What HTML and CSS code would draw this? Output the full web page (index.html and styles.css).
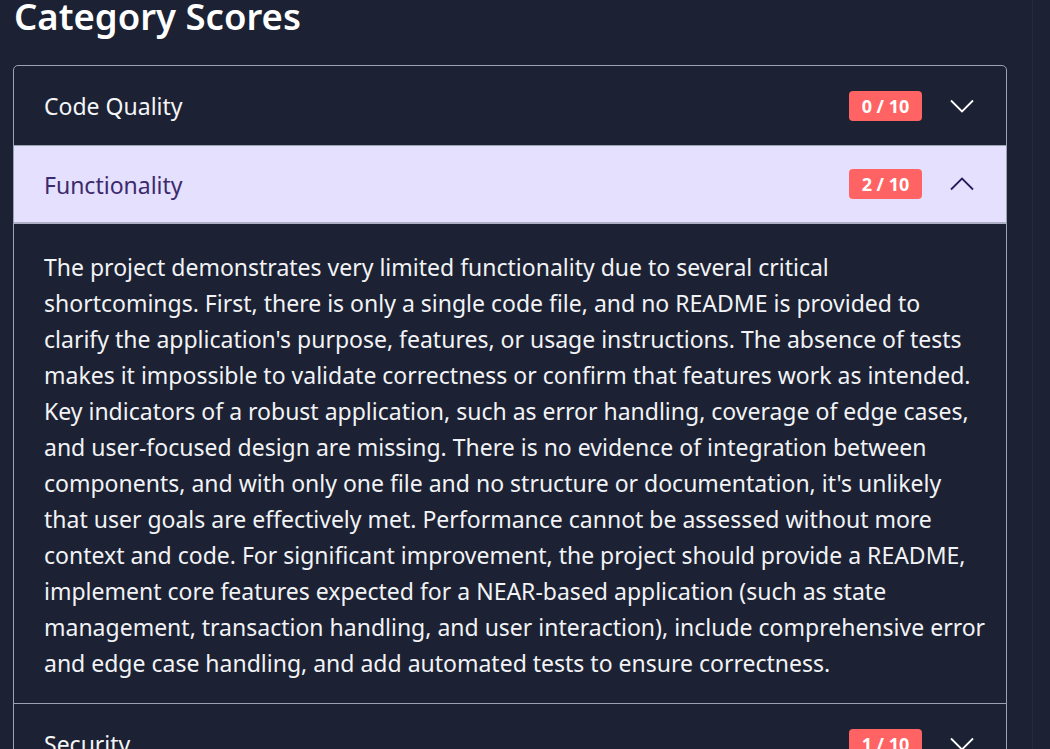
FILE: index.html
```html
<!DOCTYPE html>
<html lang="en">
<head>
<meta charset="utf-8">
<title>Category Scores</title>
<link rel="stylesheet" href="styles.css">
</head>
<body>
<div class="page">
  <h1 class="title">Category Scores</h1>
  <div class="card">
    <div class="item">
      <div class="item-head">
        <span class="item-name">Code Quality</span>
        <span class="badge">0 / 10</span>
        <svg class="chev" viewBox="0 0 24 14" width="24" height="14"><polyline points="1,1.5 12,12.5 23,1.5"/></svg>
      </div>
    </div>
    <div class="item open">
      <div class="item-head">
        <span class="item-name">Functionality</span>
        <span class="badge">2 / 10</span>
        <svg class="chev" viewBox="0 0 24 14" width="24" height="14"><polyline points="1,12.5 12,1.5 23,12.5"/></svg>
      </div>
      <div class="item-body">
        <p>The project demonstrates very limited functionality due to several critical<br>
shortcomings. First, there is only a single code file, and no README is provided to<br>
clarify the application's purpose, features, or usage instructions. The absence of tests<br>
makes it impossible to validate correctness or confirm that features work as intended.<br>
Key indicators of a robust application, such as error handling, coverage of edge cases,<br>
and user-focused design are missing. There is no evidence of integration between<br>
components, and with only one file and no structure or documentation, it's unlikely<br>
that user goals are effectively met. Performance cannot be assessed without more<br>
context and code. For significant improvement, the project should provide a README,<br>
implement core features expected for a NEAR-based application (such as state<br>
management, transaction handling, and user interaction), include comprehensive error<br>
and edge case handling, and add automated tests to ensure correctness.</p>
      </div>
    </div>
    <div class="item">
      <div class="item-head">
        <span class="item-name">Security</span>
        <span class="badge">1 / 10</span>
        <svg class="chev" viewBox="0 0 24 14" width="24" height="14"><polyline points="1,1.5 12,12.5 23,1.5"/></svg>
      </div>
    </div>
  </div>
</div>
</body>
</html>
```
FILE: styles.css
```css
html, body {
  margin: 0;
  padding: 0;
  background: #1c2233;
  height: 100%;
  overflow: hidden;
}

body {
  font-family: "Noto Sans", "Open Sans", sans-serif;
  color: #f2f3f6;
}

.page {
  width: 994px;
  min-height: 100%;
  padding: 0 25px 0 13px;
  border-right: 1px solid #262c3e;
}

.title {
  margin: -6px 0 27px 1px;
  font-size: 36.5px;
  line-height: 44px;
  font-weight: 600;
  color: #ffffff;
}

.card {
  border: 1px solid #9aa2b3;
  border-radius: 5px;
  overflow: hidden;
}

.item + .item {
  border-top: 1px solid #9aa2b3;
}

.item-head {
  display: flex;
  align-items: center;
  height: 79px;
  padding: 0 32px 0 30px;
  box-sizing: border-box;
}

.item-name {
  flex: 1;
  font-size: 23px;
  line-height: 31px;
  padding-top: 2px;
  color: #f4f5f8;
}

.badge {
  width: 73px;
  height: 30px;
  line-height: 30px;
  text-align: center;
  border-radius: 4px;
  background: #ff6363;
  color: #ffffff;
  font-size: 18px;
  font-weight: 700;
  margin-right: 28px;
}

.chev {
  display: block;
  fill: none;
  stroke: #ffffff;
  stroke-width: 1.8;
}

.open .item-head {
  height: 78px;
  background: #e4e0fe;
  border-bottom: 2px solid #aeb0c6;
}

.open .item-name {
  color: #3c2a6c;
}

.open .chev {
  stroke: #2a1c5c;
}

.item-body {
  padding: 25px 10px 22px 30px;
}

.item-body p {
  margin: 0;
  font-size: 23px;
  line-height: 36px;
  color: #f2f3f6;
}
```
